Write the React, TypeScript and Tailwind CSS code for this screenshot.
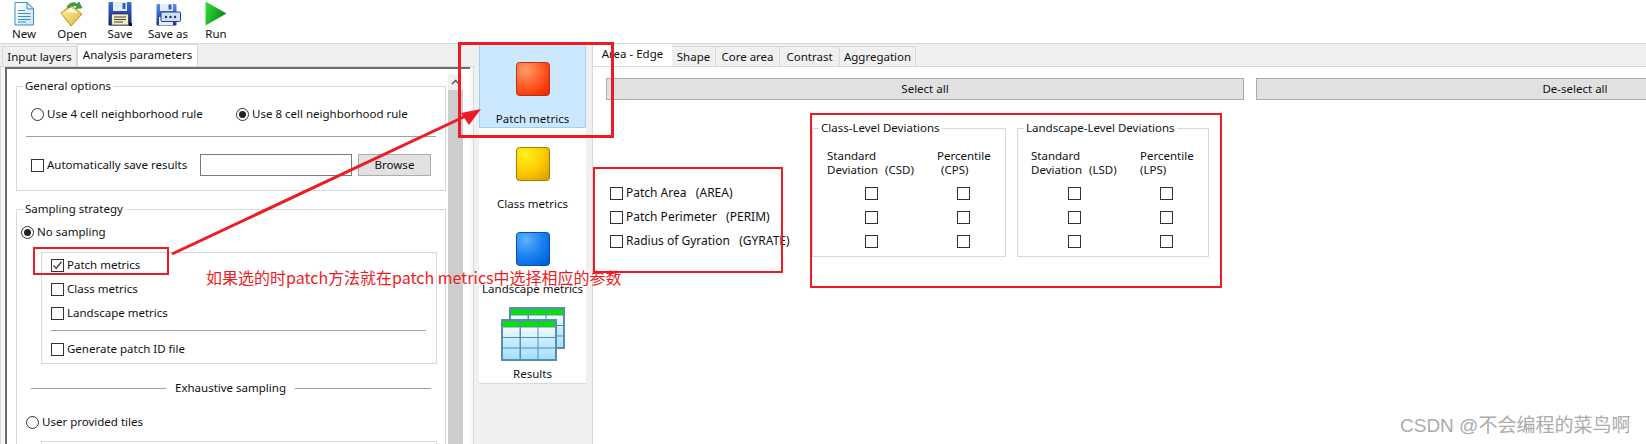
import React from "react";

const Radio = ({ on = false }: { on?: boolean }) => (
  <span className="flex h-[13px] w-[13px] shrink-0 items-center justify-center rounded-full border border-[#333333] bg-white">
    {on && <span className="h-[7px] w-[7px] rounded-full bg-[#222222]" />}
  </span>
);

const Check = ({ on = false }: { on?: boolean }) => (
  <span className="flex h-[13px] w-[13px] shrink-0 items-center justify-center border border-[#333333] bg-white">
    {on && (
      <svg width="11" height="11" viewBox="0 0 11 11">
        <path d="M1.5 5.5 L4.2 8.5 L9.5 1.8" fill="none" stroke="#444" strokeWidth="1.4" />
      </svg>
    )}
  </span>
);

const CheckRow = ({ label, on = false, cls = "" }: { label: string; on?: boolean; cls?: string }) => (
  <div className="flex h-[24px] items-center gap-[3px]">
    <Check on={on} />
    <span className={`whitespace-pre ${cls}`}>{label}</span>
  </div>
);

const Legend = ({ children }: { children: React.ReactNode }) => (
  <span className="absolute left-[6px] top-[-8px] bg-white px-[2px] leading-[14px]">{children}</span>
);

const IconNew = () => (
  <svg width="24" height="25" viewBox="0 0 24 25">
    <defs>
      <linearGradient id="nw" x1="0" y1="0" x2="1" y2="1">
        <stop offset="0" stopColor="#ffffff" />
        <stop offset="1" stopColor="#c4e6f8" />
      </linearGradient>
    </defs>
    <path d="M3 1.5 H15 L21.5 8 V24 H3 Z" fill="url(#nw)" stroke="#3f8fc0" />
    <path d="M15 1.5 V8 H21.5 Z" fill="#d9f0fb" stroke="#3f8fc0" />
    <path d="M6 9.5 H13 M6 12.5 H18.5 M6 15.5 H18.5 M6 18.5 H18.5 M6 21 H14" stroke="#3a8fc4" strokeWidth="1.2" />
  </svg>
);

const IconOpen = () => (
  <svg width="24" height="25" viewBox="0 0 24 25">
    <defs>
      <linearGradient id="op" x1="0" y1="0" x2="1" y2="1">
        <stop offset="0" stopColor="#fff6a8" />
        <stop offset="1" stopColor="#e2b23c" />
      </linearGradient>
    </defs>
    <path d="M1 12 L11 4 L22 13 L11 25 Z" fill="url(#op)" stroke="#b78a1e" />
    <path d="M4 11 L11 6 L19 12" fill="#fffbe0" stroke="#e2c25a" />
    <path d="M7 6 C9 1.5 14 0.5 17 3 L19 1 L22 7 L15.5 7.5 L17 5.5 C14 4 11 4.5 9 7 Z" fill="#3fa544" stroke="#1f7a2a" strokeWidth="0.6" />
  </svg>
);

const IconSave = () => (
  <svg width="24" height="25" viewBox="0 0 24 25">
    <defs>
      <linearGradient id="sv" x1="0" y1="0" x2="0" y2="1">
        <stop offset="0" stopColor="#3f6fd8" />
        <stop offset="1" stopColor="#0c1f78" />
      </linearGradient>
    </defs>
    <rect x="0.5" y="1" width="23" height="23.5" rx="1" fill="url(#sv)" />
    <rect x="5" y="1" width="14" height="9" fill="#e4eefa" />
    <rect x="14.5" y="2" width="3" height="6" fill="#2f5fc8" />
    <rect x="3.5" y="13" width="17" height="11" fill="#f3ecc0" stroke="#222" strokeWidth="0.6" />
    <path d="M6 16 H18 M6 18.5 H18 M6 21 H15" stroke="#444" strokeWidth="1" />
    <rect x="21" y="22" width="3" height="3" fill="#111" />
  </svg>
);

const IconSaveAs = () => (
  <svg width="25" height="23" viewBox="0 0 25 23">
    <defs>
      <linearGradient id="sa" x1="0" y1="0" x2="0" y2="1">
        <stop offset="0" stopColor="#5f8fe8" />
        <stop offset="1" stopColor="#16308c" />
      </linearGradient>
    </defs>
    <rect x="0.5" y="1" width="20" height="21.5" rx="1" fill="url(#sa)" />
    <rect x="4" y="1" width="13" height="7" fill="#e4eefa" />
    <rect x="12.5" y="1.5" width="3" height="5" fill="#2f5fc8" />
    <rect x="3" y="14" width="14" height="8" fill="#e8ecf4" />
    <rect x="5" y="9" width="19.5" height="9.5" rx="1" fill="#cfe0f5" stroke="#20409c" />
    <circle cx="10" cy="14" r="1.2" fill="#1c2f80" />
    <circle cx="14.5" cy="14" r="1.2" fill="#1c2f80" />
    <circle cx="19" cy="14" r="1.2" fill="#1c2f80" />
  </svg>
);

const IconRun = () => (
  <svg width="22" height="25" viewBox="0 0 22 25">
    <defs>
      <linearGradient id="rn" x1="0" y1="0" x2="1" y2="0.4">
        <stop offset="0" stopColor="#34e034" />
        <stop offset="1" stopColor="#0a8a1a" />
      </linearGradient>
    </defs>
    <path d="M0.5 0.5 L21.5 12.5 L0.5 24.5 Z" fill="url(#rn)" />
  </svg>
);

const Square = ({ id, a, b, c, line }: { id: string; a: string; b: string; c: string; line: string }) => (
  <svg width="34" height="34" viewBox="0 0 34 34">
    <defs>
      <radialGradient id={id} cx="0.28" cy="0.22" r="0.95">
        <stop offset="0" stopColor={a} />
        <stop offset="0.55" stopColor={b} />
        <stop offset="1" stopColor={c} />
      </radialGradient>
    </defs>
    <rect x="0.5" y="0.5" width="33" height="33" rx="3" fill={`url(#${id})`} stroke={line} />
  </svg>
);

const Table = ({ x, y }: { x: number; y: number }) => (
  <g transform={`translate(${x} ${y})`}>
    <rect x="0" y="0" width="56" height="42" fill="#5b8cab" />
    {[2, 20, 37.5].map((cx) => (
      <g key={cx}>
        <rect x={cx} y="2.5" width="16.5" height="5" fill="#00e600" />
        <rect x={cx} y="8.5" width="16.5" height="9.5" fill="url(#t1)" />
        <rect x={cx} y="19" width="16.5" height="9.5" fill="url(#t2)" />
        <rect x={cx} y="29.5" width="16.5" height="10.5" fill="url(#t3)" />
      </g>
    ))}
  </g>
);

const IconResults = () => (
  <svg width="64" height="54" viewBox="0 0 64 54">
    <defs>
      <linearGradient id="t1" x1="0" y1="0" x2="0" y2="1">
        <stop offset="0" stopColor="#f2fbff" />
        <stop offset="1" stopColor="#d2f0ff" />
      </linearGradient>
      <linearGradient id="t2" x1="0" y1="0" x2="0" y2="1">
        <stop offset="0" stopColor="#d2f0ff" />
        <stop offset="1" stopColor="#b5e5ff" />
      </linearGradient>
      <linearGradient id="t3" x1="0" y1="0" x2="0" y2="1">
        <stop offset="0" stopColor="#bce8ff" />
        <stop offset="1" stopColor="#a4deff" />
      </linearGradient>
    </defs>
    <Table x={8} y={0} />
    <Table x={0} y={12} />
  </svg>
);

const tools: [string, React.ReactNode][] = [
  ["New", <IconNew />],
  ["Open", <IconOpen />],
  ["Save", <IconSave />],
  ["Save as", <IconSaveAs />],
  ["Run", <IconRun />],
];

const NavItem = ({ label, icon, cls, gap }: { label: string; icon: React.ReactNode; cls: string; gap: string }) => (
  <div className={`flex flex-col items-center ${cls}`}>
    {icon}
    <span className={`${gap} leading-[14px]`}>{label}</span>
  </div>
);

const Dev = ({ abbr, abbr2, pl, w, a, b, pad2 }: { abbr: string; abbr2: string; pl: string; w: string; a: string; b: string; pad2: string }) => (
  <div className={`${pl} pt-[20px]`}>
    <div className="flex leading-[14px]">
      <div className={`${w} shrink-0`}>
        <div>Standard</div>
        <div className="flex">
          <span className="w-[58px] shrink-0">Deviation</span>
          <span>{abbr}</span>
        </div>
      </div>
      <div>
        <div>Percentile</div>
        <div className={pad2}>{abbr2}</div>
      </div>
    </div>
    <div className="mt-[4px]">
      {[0, 1, 2].map((i) => (
        <div key={i} className="flex h-[24px] items-center">
          <div className={`${w} shrink-0 ${a}`}>
            <Check />
          </div>
          <div className={b}>
            <Check />
          </div>
        </div>
      ))}
    </div>
  </div>
);

const RedBox = ({ cls }: { cls: string }) => <div className={`pointer-events-none absolute border-[#ed1c24] ${cls}`} />;

export default function App() {
  return (
    <div
      className="relative h-[444px] w-[1646px] overflow-hidden bg-[#f0f0f0] text-[11.5px] leading-[14px] text-[#111111]"
      style={{ fontFamily: '"Noto Sans", "Noto Sans CJK SC", sans-serif' }}
    >
      {/* Toolbar */}
      <div className="flex h-[44px] border-b border-[#d9d9d9] bg-white">
        {tools.map(([label, icon]) => (
          <div key={label} className="flex w-[48px] flex-col items-center pt-[1px]">
            <div className="flex h-[25px] items-end">{icon}</div>
            <span className="mt-[1px]">{label}</span>
          </div>
        ))}
      </div>

      <div className="flex h-[400px]">
        {/* Left column */}
        <div className="flex w-[474px] shrink-0 flex-col">
          <div className="flex h-[22px] items-end pl-[2px]">
            <div className="flex h-[20px] w-[75px] items-center justify-center border border-b-0 border-[#d9d9d9] bg-[#f0f0f0]">Input layers</div>
            <div className="flex h-[22px] w-[121px] items-center justify-center border border-b-0 border-[#d9d9d9] bg-white pb-[2px]">Analysis parameters</div>
          </div>
          <div className="min-h-0 flex-1 border-t border-r border-l border-[#d9d9d9] bg-[#f7f7f7] pl-[4px] pr-[3px]">
            <div className="flex h-full overflow-hidden border-t-2 border-l-2 border-[#6b6b6b] bg-white">
              <div className="w-[441px] shrink-0 overflow-hidden pl-[9px] pt-[17px]">
                <div className="relative h-[105px] w-[430px] border border-[#d9d9d9]">
                  <Legend>General options</Legend>
                  <div className="mt-[17px] flex h-[20px] items-center pl-[14px]">
                    <div className="flex w-[205px] items-center gap-[3px]">
                      <Radio />
                      <span>Use 4 cell neighborhood rule</span>
                    </div>
                    <div className="flex items-center gap-[3px]">
                      <Radio on />
                      <span>Use 8 cell neighborhood rule</span>
                    </div>
                  </div>
                  <div className="ml-[9px] mt-[12px] h-px w-[410px] bg-[#a0a0a0]" />
                  <div className="mt-[17px] flex items-center pl-[14px]">
                    <div className="flex w-[169px] items-center gap-[3px]">
                      <Check />
                      <span>Automatically save results</span>
                    </div>
                    <div className="h-[22px] w-[152px] border border-[#7a7a7a] bg-white" />
                    <button className="ml-[6px] flex h-[22px] w-[73px] items-center justify-center border border-[#adadad] bg-[#e1e1e1]">Browse</button>
                  </div>
                </div>

                <div className="relative mt-[18px] h-[300px] w-[430px] border border-[#d9d9d9]">
                  <Legend>Sampling strategy</Legend>
                  <div className="mt-[12px] flex h-[20px] items-center gap-[3px] pl-[4px]">
                    <Radio on />
                    <span>No sampling</span>
                  </div>
                  <div className="ml-[24px] mt-[10px] h-[112px] w-[396px] border border-[#d9d9d9] pl-[9px]">
                    <CheckRow label="Patch metrics" on />
                    <CheckRow label="Class metrics" />
                    <CheckRow label="Landscape metrics" />
                    <div className="mt-[5px] h-px w-[375px] bg-[#a0a0a0]" />
                    <div className="mt-[6px]">
                      <CheckRow label="Generate patch ID file" />
                    </div>
                  </div>
                  <div className="mt-[14px] flex h-[20px] items-center pl-[14px]">
                    <div className="h-px w-[135px] bg-[#a0a0a0]" />
                    <span className="w-[129px] text-center">Exhaustive sampling</span>
                    <div className="h-px w-[136px] bg-[#a0a0a0]" />
                  </div>
                  <div className="mt-[14px] flex h-[20px] items-center gap-[3px] pl-[9px]">
                    <Radio />
                    <span>User provided tiles</span>
                  </div>
                  <div className="ml-[24px] mt-[9px] h-[60px] w-[396px] border border-[#d9d9d9]" />
                </div>
              </div>

              {/* Scroll bar */}
              <div className="w-[15px] shrink-0 pt-[5px]">
                <div className="flex h-[16px] items-center justify-center bg-[#f0f0f0]">
                  <svg width="9" height="6" viewBox="0 0 9 6">
                    <path d="M1 5 L4.5 1.5 L8 5" fill="none" stroke="#555" strokeWidth="1.5" />
                  </svg>
                </div>
                <div className="h-[360px] bg-[#cdcdcd]" />
              </div>
            </div>
          </div>
        </div>

        {/* Navigation list */}
        <div className="ml-[5px] h-[340px] w-[107px] shrink-0 border-b border-[#d9d9d9] bg-white">
          <NavItem cls="h-[84px] border border-[#99d1ff] bg-[#cce8ff] pt-[17px]" gap="mt-[16px]" label="Patch metrics" icon={<Square id="p1" a="#ff9c68" b="#ff5a26" c="#f02800" line="#b83010" />} />
          <NavItem cls="h-[85px] pt-[19px]" gap="mt-[16px]" label="Class metrics" icon={<Square id="p2" a="#fff020" b="#ffcc00" c="#dba000" line="#a87c00" />} />
          <NavItem cls="h-[85px] pt-[19px]" gap="mt-[16px]" label="Landscape metrics" icon={<Square id="p3" a="#60b0ff" b="#1a80f0" c="#0060d8" line="#0052b0" />} />
          <NavItem cls="h-[85px] pt-[9px]" gap="mt-[6px]" label="Results" icon={<IconResults />} />
        </div>

        {/* Right column */}
        <div className="ml-[6px] flex min-w-0 flex-1 flex-col overflow-hidden">
          <div className="flex h-[22px] items-end border-l border-[#d9d9d9]">
            <div className="flex h-[22px] w-[79px] items-center justify-center bg-white pb-[2px]">Area - Edge</div>
            {[
              ["Shape", "w-[44px]"],
              ["Core area", "w-[64px]"],
              ["Contrast", "w-[60px]"],
              ["Aggregation", "w-[76px]"],
            ].map(([t, w]) => (
              <div key={t} className={`flex h-[20px] items-center justify-center border border-l-0 border-b-0 border-[#d9d9d9] bg-[#f0f0f0] ${w}`}>
                {t}
              </div>
            ))}
          </div>
          <div className="min-h-0 flex-1 border-t border-l border-[#d9d9d9] bg-white">
            <div className="flex gap-[12px] pl-[13px] pt-[11px]">
              <button className="flex h-[22px] w-[638px] shrink-0 items-center justify-center border border-[#adadad] bg-[#e1e1e1]">Select all</button>
              <button className="flex h-[22px] w-[638px] shrink-0 items-center justify-center border border-[#adadad] bg-[#e1e1e1]">De-select all</button>
            </div>
            <div className="mt-[28px] flex pl-[17px]">
              <div className="w-[202px] shrink-0 pt-[53px]">
                <CheckRow cls="text-[12px]" label="Patch Area   (AREA)" />
                <CheckRow cls="text-[12px]" label="Patch Perimeter   (PERIM)" />
                <CheckRow cls="text-[12px]" label="Radius of Gyration   (GYRATE)" />
              </div>
              <div className="relative h-[129px] w-[194px] shrink-0 border border-[#d9d9d9]">
                <Legend>Class-Level Deviations</Legend>
                <Dev abbr="(CSD)" abbr2="(CPS)" pl="pl-[14px]" w="w-[110px]" a="pl-[38px]" b="pl-[20px]" pad2="pl-[4px]" />
              </div>
              <div className="relative ml-[11px] h-[129px] w-[192px] shrink-0 border border-[#d9d9d9]">
                <Legend>Landscape-Level Deviations</Legend>
                <Dev abbr="(LSD)" abbr2="(LPS)" pl="pl-[13px]" w="w-[109px]" a="pl-[37px]" b="pl-[20px]" pad2="" />
              </div>
            </div>
          </div>
        </div>
      </div>

      {/* Annotations drawn on top of the screenshot */}
      <RedBox cls="left-[458px] top-[42px] h-[96px] w-[156px] border-[3px]" />
      <RedBox cls="left-[33px] top-[247px] h-[28px] w-[136px] border-[2px]" />
      <RedBox cls="left-[593px] top-[167px] h-[106px] w-[190px] border-[2px]" />
      <RedBox cls="left-[810px] top-[113px] h-[175px] w-[412px] border-[2px]" />
      <svg className="pointer-events-none absolute left-0 top-0" width="1646" height="444" viewBox="0 0 1646 444">
        <line x1="172" y1="254" x2="470" y2="114" stroke="#ed1c24" strokeWidth="3" />
        <polygon points="481,109 469,125 461,113" fill="#ed1c24" />
      </svg>
      <span className="absolute left-[206px] top-[266px] whitespace-nowrap text-[16px] leading-[22px] text-[#ed1c24]" style={{ fontFamily: '"Noto Sans CJK SC", sans-serif' }}>
        如果选的时patch方法就在patch metrics中选择相应的参数
      </span>
      <span className="absolute left-[1400px] top-[415px] whitespace-nowrap text-[19px] leading-[22px] text-[#ababab]" style={{ fontFamily: '"Liberation Sans", "Noto Sans CJK SC", sans-serif' }}>
        CSDN @不会编程的菜鸟啊
      </span>
    </div>
  );
}
